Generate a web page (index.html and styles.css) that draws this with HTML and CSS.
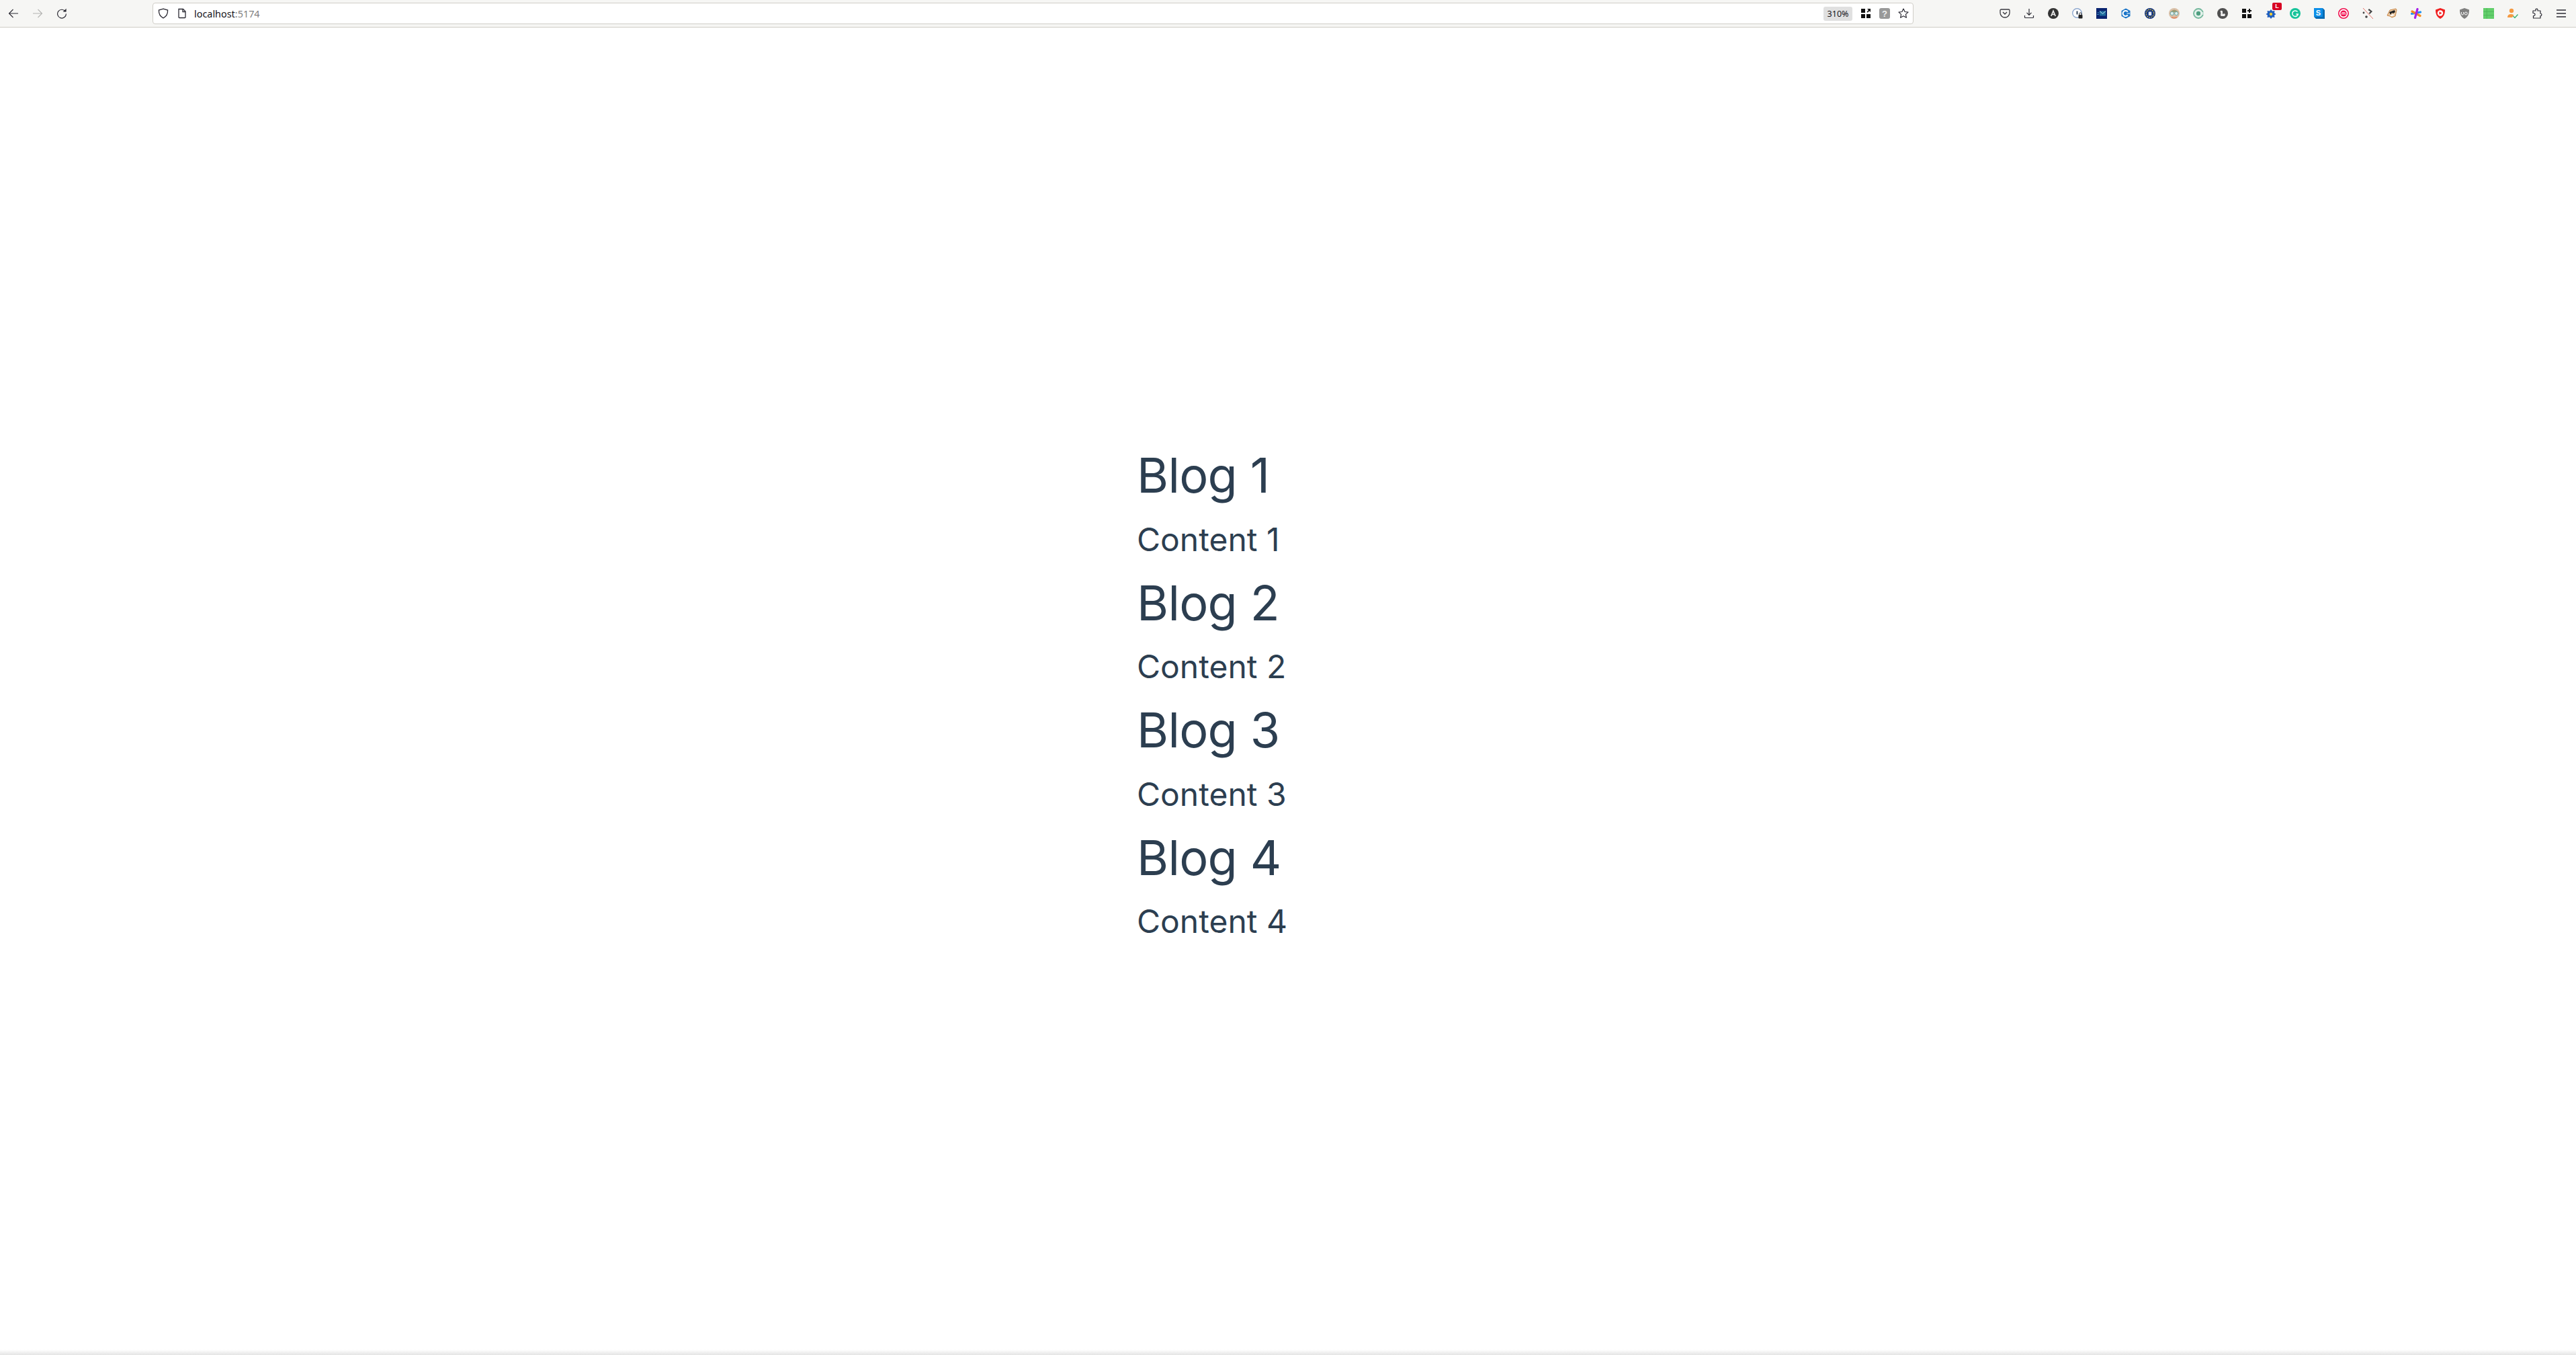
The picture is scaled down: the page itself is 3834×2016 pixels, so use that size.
FILE: index.html
```html
<!DOCTYPE html>
<html lang="en">
<head>
<meta charset="utf-8">
<title>localhost:5174</title>
<link rel="stylesheet" href="styles.css">
</head>
<body>
<div class="app">
<header class="toolbar">
  <nav class="nav-buttons">
    <span class="cell"><svg class="ic" viewBox="0 0 16 16"><path d="M15 8H1.5M7.5 2 1.5 8l6 6" fill="none" stroke="#2b2a33" stroke-width="1.1"/></svg></span>
    <span class="cell"><svg class="ic" viewBox="0 0 16 16"><path d="M1 8h13.5M8.5 2l6 6-6 6" fill="none" stroke="#b4b4b2" stroke-width="1.1"/></svg></span>
    <span class="cell"><svg class="ic" viewBox="0 0 16 16"><path d="M13.4 5.2A6.4 6.4 0 1 0 14.4 8.6" fill="none" stroke="#2b2a33" stroke-width="1.2"/><path d="M9.6 5.6h5V.8z" fill="#2b2a33"/></svg></span>
  </nav>
  <div class="urlbar">
    <svg class="ic shield" viewBox="0 0 16 16"><path d="M8 1.2 14.6 3c.2 5.6-1.6 9.4-6.6 11.8C3 12.4 1.200 8.600 1.400 3z" fill="none" stroke="#2b2a33" stroke-width="1.300"/></svg>
    <svg class="ic page" viewBox="0 0 16 16"><path d="M3 1.500h6.500L13 5v8.500q0 1-1 1H4q-1 0-1-1z" fill="none" stroke="#2b2a33" stroke-width="1.300"/><path d="M9 1.500V5.500h4" fill="none" stroke="#2b2a33" stroke-width="1.300"/></svg>
    <span class="address">localhost<span class="port">:5174</span></span>
    <span class="url-end">
      <span class="zoom-badge">310%</span>
      <span class="url-action"><svg class="ic" viewBox="0 0 16 16"><path d="M1 1h6v6H1zM1 9h6v6H1zM9 9h6v6H9zM10 1h5v5l-1.800-1.800-2.500 2.500-1.200-1.200 2.500-2.500z" fill="#111"/></svg></span>
      <span class="url-action"><svg class="ic" viewBox="0 0 16 16"><rect width="16" height="16" rx="3" fill="#999"/><text x="8" y="13" class="q">?</text></svg></span>
      <span class="url-action"><svg class="ic" viewBox="0 0 16 16"><path d="M8 1l2.100 4.500 4.900.6-3.600 3.300 1 4.800L8 11.800l-4.400 2.400 1-4.800L1 6.100l4.900-.6z" fill="none" stroke="#2b2a33" stroke-width="1.200" stroke-linejoin="round"/></svg></span>
    </span>
  </div>
  <div class="extensions">
    <span class="cell"><svg class="ic" viewBox="0 0 16 16"><path d="M2.500 2h11Q15 2 15 3.500V7a7 7 0 0 1-14 0V3.500Q1 2 2.500 2z" fill="none" stroke="#3a3a40" stroke-width="1.300"/><path d="M5 6l3 3 3-3" fill="none" stroke="#3a3a40" stroke-width="1.400"/></svg></span>
    <span class="cell"><svg class="ic" viewBox="0 0 16 16"><path d="M8 1v9M4.500 6.800 8 10.300l3.500-3.500M1.500 11v2.500q0 1 1 1h11q1 0 1-1V11" fill="none" stroke="#2b2a33" stroke-width="1.200"/></svg></span>
    <span class="cell"><svg class="ic" viewBox="0 0 16 16"><circle cx="8" cy="8" r="8" fill="#333"/><path d="M4.800 12 8 4.200 11.200 12M6 9.500h4" fill="none" stroke="#eee" stroke-width="1.700"/></svg></span>
    <span class="cell"><svg class="ic" viewBox="0 0 16 16"><circle cx="7.500" cy="7.500" r="6.800" fill="#fff" stroke="#8fa9cf" stroke-width="1.400"/><path d="M7.500 4.500v5" stroke="#33475f" stroke-width="2"/><rect x="9.500" y="10" width="6" height="5.500" rx="1" fill="#222"/><path d="M10.800 10V8.600a1.700 1.700 0 0 1 3.400 0V10" fill="none" stroke="#222" stroke-width="1"/></svg></span>
    <span class="cell"><svg class="ic" viewBox="0 0 16 16"><rect width="16" height="16" fill="#0a2470"/><path d="M5 4.500h9v7H5z" fill="#1f6f9f"/><path d="M5 4.500 9.500 8.500 14 4.500" fill="none" stroke="#bfe6f5" stroke-width="1"/><path d="M1.500 7h3M1 9.500h3" stroke="#3f8fbf" stroke-width="1"/></svg></span>
    <span class="cell"><svg class="ic" viewBox="0 0 16 16"><path d="M8 .5 14.500 4v8L8 15.500 1.500 12V4z" fill="#1c76c8"/><path d="M10.800 5.600A4 4 0 1 0 10.800 10.400" fill="none" stroke="#fff" stroke-width="2.200"/><path d="M9.500 8h4.500" stroke="#cfe4f6" stroke-width="1.300"/></svg></span>
    <span class="cell"><svg class="ic" viewBox="0 0 16 16"><circle cx="8" cy="8" r="8" fill="#13357f"/><circle cx="8" cy="8" r="5.800" fill="none" stroke="#e5c53c" stroke-width="1.400" stroke-dasharray="1.500 1.500"/><rect x="5.800" y="5.500" width="4.400" height="5.500" rx=".6" fill="#dfe6f2"/></svg></span>
    <span class="cell"><svg class="ic" viewBox="0 0 16 16"><circle cx="8" cy="8" r="8" fill="#d8bfa6"/><path d="M2 6q6-7 12 0z" fill="#9c9a6f"/><circle cx="4.800" cy="8" r="2.600" fill="#dff0ee" stroke="#6ba8a8"/><circle cx="11.200" cy="8" r="2.600" fill="#dff0ee" stroke="#6ba8a8"/><path d="M4 13.500q4 2.500 8 0" stroke="#e08a65" stroke-width="2" fill="none"/></svg></span>
    <span class="cell"><svg class="ic" viewBox="0 0 16 16"><circle cx="8" cy="8" r="7" fill="#e3f1eb" stroke="#74b89c" stroke-width="1.800"/><circle cx="8" cy="8" r="3.200" fill="#4f9f80"/><path d="M11 6h5v4h-5z" fill="#e3f1eb" opacity=".7"/></svg></span>
    <span class="cell"><svg class="ic" viewBox="0 0 16 16"><circle cx="8" cy="8" r="8" fill="#505050"/><path d="M4.500 4.500q2.500-1.500 3.500.5v4q3-1.500 4 .5l-1 2.500H5.500q-1-3 0-4.500z" fill="#ededed"/></svg></span>
    <span class="cell"><svg class="ic" viewBox="0 0 16 16"><path d="M1 1h6v6H1zM1 9h6v6H1zM9 9h6v6H9z" fill="#111"/><path d="M12 1v6M9 4h6" stroke="#111" stroke-width="2"/></svg></span>
    <span class="cell badged"><svg class="ic" viewBox="0 0 16 16"><path d="M8 2l2 2.500 3.500-.5-.5 3.200L15.500 9 13 10.800l.5 3.200-3.500-.500L8 16l-2-2.500-3.500.5.500-3.200L.5 9 3 7.200 2.500 4 6 4.500z" fill="#1f5fbf"/><circle cx="8" cy="9" r="2.200" fill="#e8c93a"/></svg><span class="badge">L</span></span>
    <span class="cell"><svg class="ic" viewBox="0 0 16 16"><circle cx="8" cy="8" r="8" fill="#15c39a"/><path d="M11.500 5.600A4.300 4.300 0 1 0 12.300 9H9.300" fill="none" stroke="#fff" stroke-width="1.500"/></svg></span>
    <span class="cell"><svg class="ic" viewBox="0 0 16 16"><path d="M0 0h13l3 3v13H3l-3-3z" fill="#0a6bb3"/><rect width="13" height="13" fill="#0d8fe8"/><text x="6.500" y="10.500" class="s">S</text></svg></span>
    <span class="cell"><svg class="ic" viewBox="0 0 16 16"><circle cx="8" cy="8" r="7.200" fill="#fff" stroke="#f0104f" stroke-width="1.600"/><circle cx="8" cy="8" r="4.600" fill="#f0104f"/><path d="M5.800 10V6.800h4.400V10M8 7v3" fill="none" stroke="#fff" stroke-width="1"/></svg></span>
    <span class="cell"><svg class="ic" viewBox="0 0 16 16"><circle cx="2" cy="7" r="1.400" fill="#444"/><circle cx="6" cy="13" r="1.800" fill="#444"/><path d="M10 1l5 4-4 4-1.500-1.500L12 5 8.500 3z" fill="#444"/><path d="M1 0l15 16" stroke="#e8746a" stroke-width="1"/></svg></span>
    <span class="cell"><svg class="ic" viewBox="0 0 16 16"><path d="M1 11 5 3l9-2 1 2-2 9-5 2-3-2z" fill="#e9c9a5" stroke="#c7823f"/><path d="M4 6l8-3 1 3-3 2-2-1-2 3z" fill="#222"/><path d="M5 11l5-2 1 2-4 1z" fill="#fff"/></svg></span>
    <span class="cell"><svg class="ic" viewBox="0 0 16 16"><path d="M1.500 8.500 14.500 6" stroke="#1e90f0" stroke-width="3.200" stroke-linecap="round"/><path d="M2 5 14 11.500" stroke="#f58a1f" stroke-width="3.200" stroke-linecap="round"/><path d="M10 1.500 6.500 14.500" stroke="#a51fe8" stroke-width="3.200" stroke-linecap="round"/></svg></span>
    <span class="cell"><svg class="ic" viewBox="0 0 16 16"><path d="M1 2.500 8 0l7 2.500c0 6-1.500 10.500-7 13.500C2.500 13 1 8.500 1 2.500z" fill="#f01f1f"/><circle cx="8" cy="7.500" r="4.200" fill="#fff"/><path d="M6.500 5.300v4.400L10.500 7.500z" fill="#f01f1f"/></svg></span>
    <span class="cell"><svg class="ic" viewBox="0 0 16 16"><path d="M1 2.500 8 0l7 2.500c0 6-1.500 10.500-7 13.500C2.500 13 1 8.500 1 2.500z" fill="#80807f"/><path d="M3.500 6v2.500a1.500 1.500 0 0 0 3 0V6" fill="none" stroke="#fff"/><circle cx="10.200" cy="8" r="2" fill="none" stroke="#fff"/></svg></span>
    <span class="cell"><svg class="ic" viewBox="0 0 16 16"><rect width="16" height="16" fill="#62cf6b"/><path d="M0 5.300h16M0 10.600h16M5.300 0v16" stroke="#4db357" stroke-width=".8"/></svg></span>
    <span class="cell"><svg class="ic" viewBox="0 0 16 16"><circle cx="6" cy="4" r="3.200" fill="#f59a42"/><path d="M0 14q0-5 5.500-5 3 0 4 1.500L7 14z" fill="#f59a42"/><path d="M8.500 12l2.500 2.500 4.500-5" fill="none" stroke="#3cb371" stroke-width="1.500"/></svg></span>
    <span class="cell"><svg class="ic" viewBox="0 0 16 16"><path d="M6 1.500q2.500-1.300 3 1V4h4v4q2.700.5 1.500 3-.5 1-1.500.7V15H2.500v-3.500Q5 11.700 5 9.500T2 7.500V4h4V1.500z" fill="none" stroke="#2b2a33" stroke-width="1.200" stroke-linejoin="round"/></svg></span>
    <span class="cell"><svg class="ic" viewBox="0 0 16 16"><path d="M1 3h14M1 8h14M1 13h14" stroke="#2b2a33" stroke-width="1.300"/></svg></span>
  </div>
</header>
<main class="page-body">
  <section class="blog-list">
    <article class="post"><h2 class="post-title">Blog 1</h2><p class="post-text">Content 1</p></article>
    <article class="post"><h2 class="post-title">Blog 2</h2><p class="post-text">Content 2</p></article>
    <article class="post"><h2 class="post-title">Blog 3</h2><p class="post-text">Content 3</p></article>
    <article class="post"><h2 class="post-title">Blog 4</h2><p class="post-text">Content 4</p></article>
  </section>
</main>
<div class="bottom-shade"></div>
</div>
</body>
</html>
```
FILE: styles.css
```css
* { box-sizing: border-box; }
html, body { margin: 0; height: 100%; background: #fff; }
.app { height: 2016px; display: flex; flex-direction: column; overflow: hidden; }
.toolbar {
  height: 41px; flex: none; display: flex; align-items: center;
  background: #f6f6f4; border-bottom: 1px solid #cfcdc6;
  padding-left: 2px; padding-right: 4px;
}
.cell { width: 36px; height: 36px; flex: none; display: flex; align-items: center; justify-content: center; position: relative; }
.ic { width: 16px; height: 16px; display: block; flex: none; }
.nav-buttons { display: flex; flex: none; }
.urlbar {
  width: 2621px; height: 32px; margin-left: 117px; flex: none;
  display: flex; align-items: center; background: #fff;
  border: 1px solid #d0cec8; border-radius: 4px; padding-left: 7px;
  font-family: "Noto Sans", sans-serif; font-size: 14.4px; color: #15141a;
}
.page { margin-left: 12px; }
.address { margin-left: 10px; white-space: nowrap; }
.port { color: #7f7f7f; }
.url-end { margin-left: auto; display: flex; align-items: center; }
.zoom-badge { width: 43px; height: 21px; background: #e0e0e0; border-radius: 3px; font-size: 12.5px; display: flex; align-items: center; justify-content: center; margin-right: 6px; }
.url-action { width: 28px; display: flex; justify-content: center; }
.q { font: 700 13px "Liberation Sans", sans-serif; fill: #eee; text-anchor: middle; }
.s { font: 700 11px "Liberation Sans", sans-serif; fill: #fff; text-anchor: middle; }
.extensions { display: flex; flex: none; margin-left: auto; }
.badge { position: absolute; left: 20px; top: 2px; width: 14px; height: 11px; background: #d70022; color: #fff; border-radius: 2px; font: 700 9px/11px "Liberation Sans", sans-serif; text-align: center; }
.page-body { flex: 1; display: flex; align-items: center; padding: 9px 0 0 1692px; font-family: Inter, sans-serif; color: #2c3e50; }
.post-title { margin: 0; font-size: 72px; font-weight: 400; letter-spacing: -0.7px; line-height: 113.5px; }
.post-text { margin: 0; font-size: 48px; line-height: 74px; padding-top: 2px; }
.bottom-shade { height: 8px; flex: none; background: linear-gradient(#fff, #e4e4e4); }
```
